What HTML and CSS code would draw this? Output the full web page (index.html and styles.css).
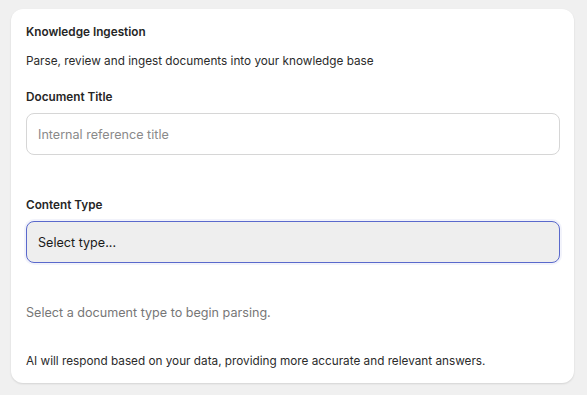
FILE: index.html
```html
<!DOCTYPE html>
<html lang="en">
  <head>
    <meta charset="UTF-8" />
    <meta name="viewport" content="width=device-width, initial-scale=1.0" />
    <title>Knowledge Ingestion</title>
    <link rel="stylesheet" href="styles.css">
  </head>
  <body>
    <div class="ingest-card">
      <h1 class="card-title">Knowledge Ingestion</h1>
      <p class="card-subtitle">Parse, review and ingest documents into your knowledge base</p>

      <div class="field-group">
        <label for="doc-title">Document Title</label>
        <input id="doc-title" type="text" placeholder="Internal reference title" />
      </div>

      <div class="field-group">
        <label for="content-type">Content Type</label>
        <div class="select-box" id="content-type">Select type...</div>
      </div>

      <p class="hint">Select a document type to begin parsing.</p>

      <p class="footnote">AI will respond based on your data, providing more accurate and relevant answers.</p>
    </div>
  </body>
</html>
```

FILE: styles.css
```css
* {
  box-sizing: border-box;
  margin: 0;
  padding: 0;
}

body {
  font-family: Inter, "Noto Sans", sans-serif;
  background: #f0f0f0;
  color: #1f1f1f;
  padding: 9px 13px 0 11px;
  height: 395px;
}

.ingest-card {
  background: #ffffff;
  border-radius: 12px;
  box-shadow: 0 1px 2px rgba(0, 0, 0, 0.12);
  padding: 16px 14px 15px 15px;
  height: 374px;
}

.card-title {
  font-size: 11.75px;
  font-weight: 600;
  line-height: 15px;
  color: #262626;
}

.card-subtitle {
  margin-top: 14px;
  font-size: 11.75px;
  line-height: 15px;
  color: #2b2b2b;
}

.field-group {
  margin-top: 21px;
}

.field-group + .field-group {
  margin-top: 43px;
}

.field-group label {
  display: block;
  font-size: 11.75px;
  font-weight: 600;
  line-height: 15px;
  color: #262626;
  margin-bottom: 8px;
}

.field-group input {
  display: block;
  width: 100%;
  height: 42px;
  padding: 0 11px;
  font-family: inherit;
  font-size: 12.6px;
  border: 1px solid #d6d6d6;
  border-radius: 8px;
  background: #ffffff;
  color: #1f1f1f;
  outline: none;
}

.field-group input::placeholder {
  color: #8a8a8a;
}

.select-box {
  display: flex;
  align-items: center;
  height: 42px;
  padding: 0 11px;
  font-size: 12.6px;
  color: #1a1a1a;
  background: #eeeeee;
  border: 1px solid #5a69cc;
  border-radius: 8px;
  box-shadow: 0 0 0 2px rgba(90, 105, 204, 0.08);
}

.hint {
  margin-top: 42px;
  font-size: 12.6px;
  line-height: 16px;
  color: #777777;
}

.footnote {
  margin-top: 33px;
  font-size: 11.75px;
  line-height: 15px;
  color: #2b2b2b;
}
```
